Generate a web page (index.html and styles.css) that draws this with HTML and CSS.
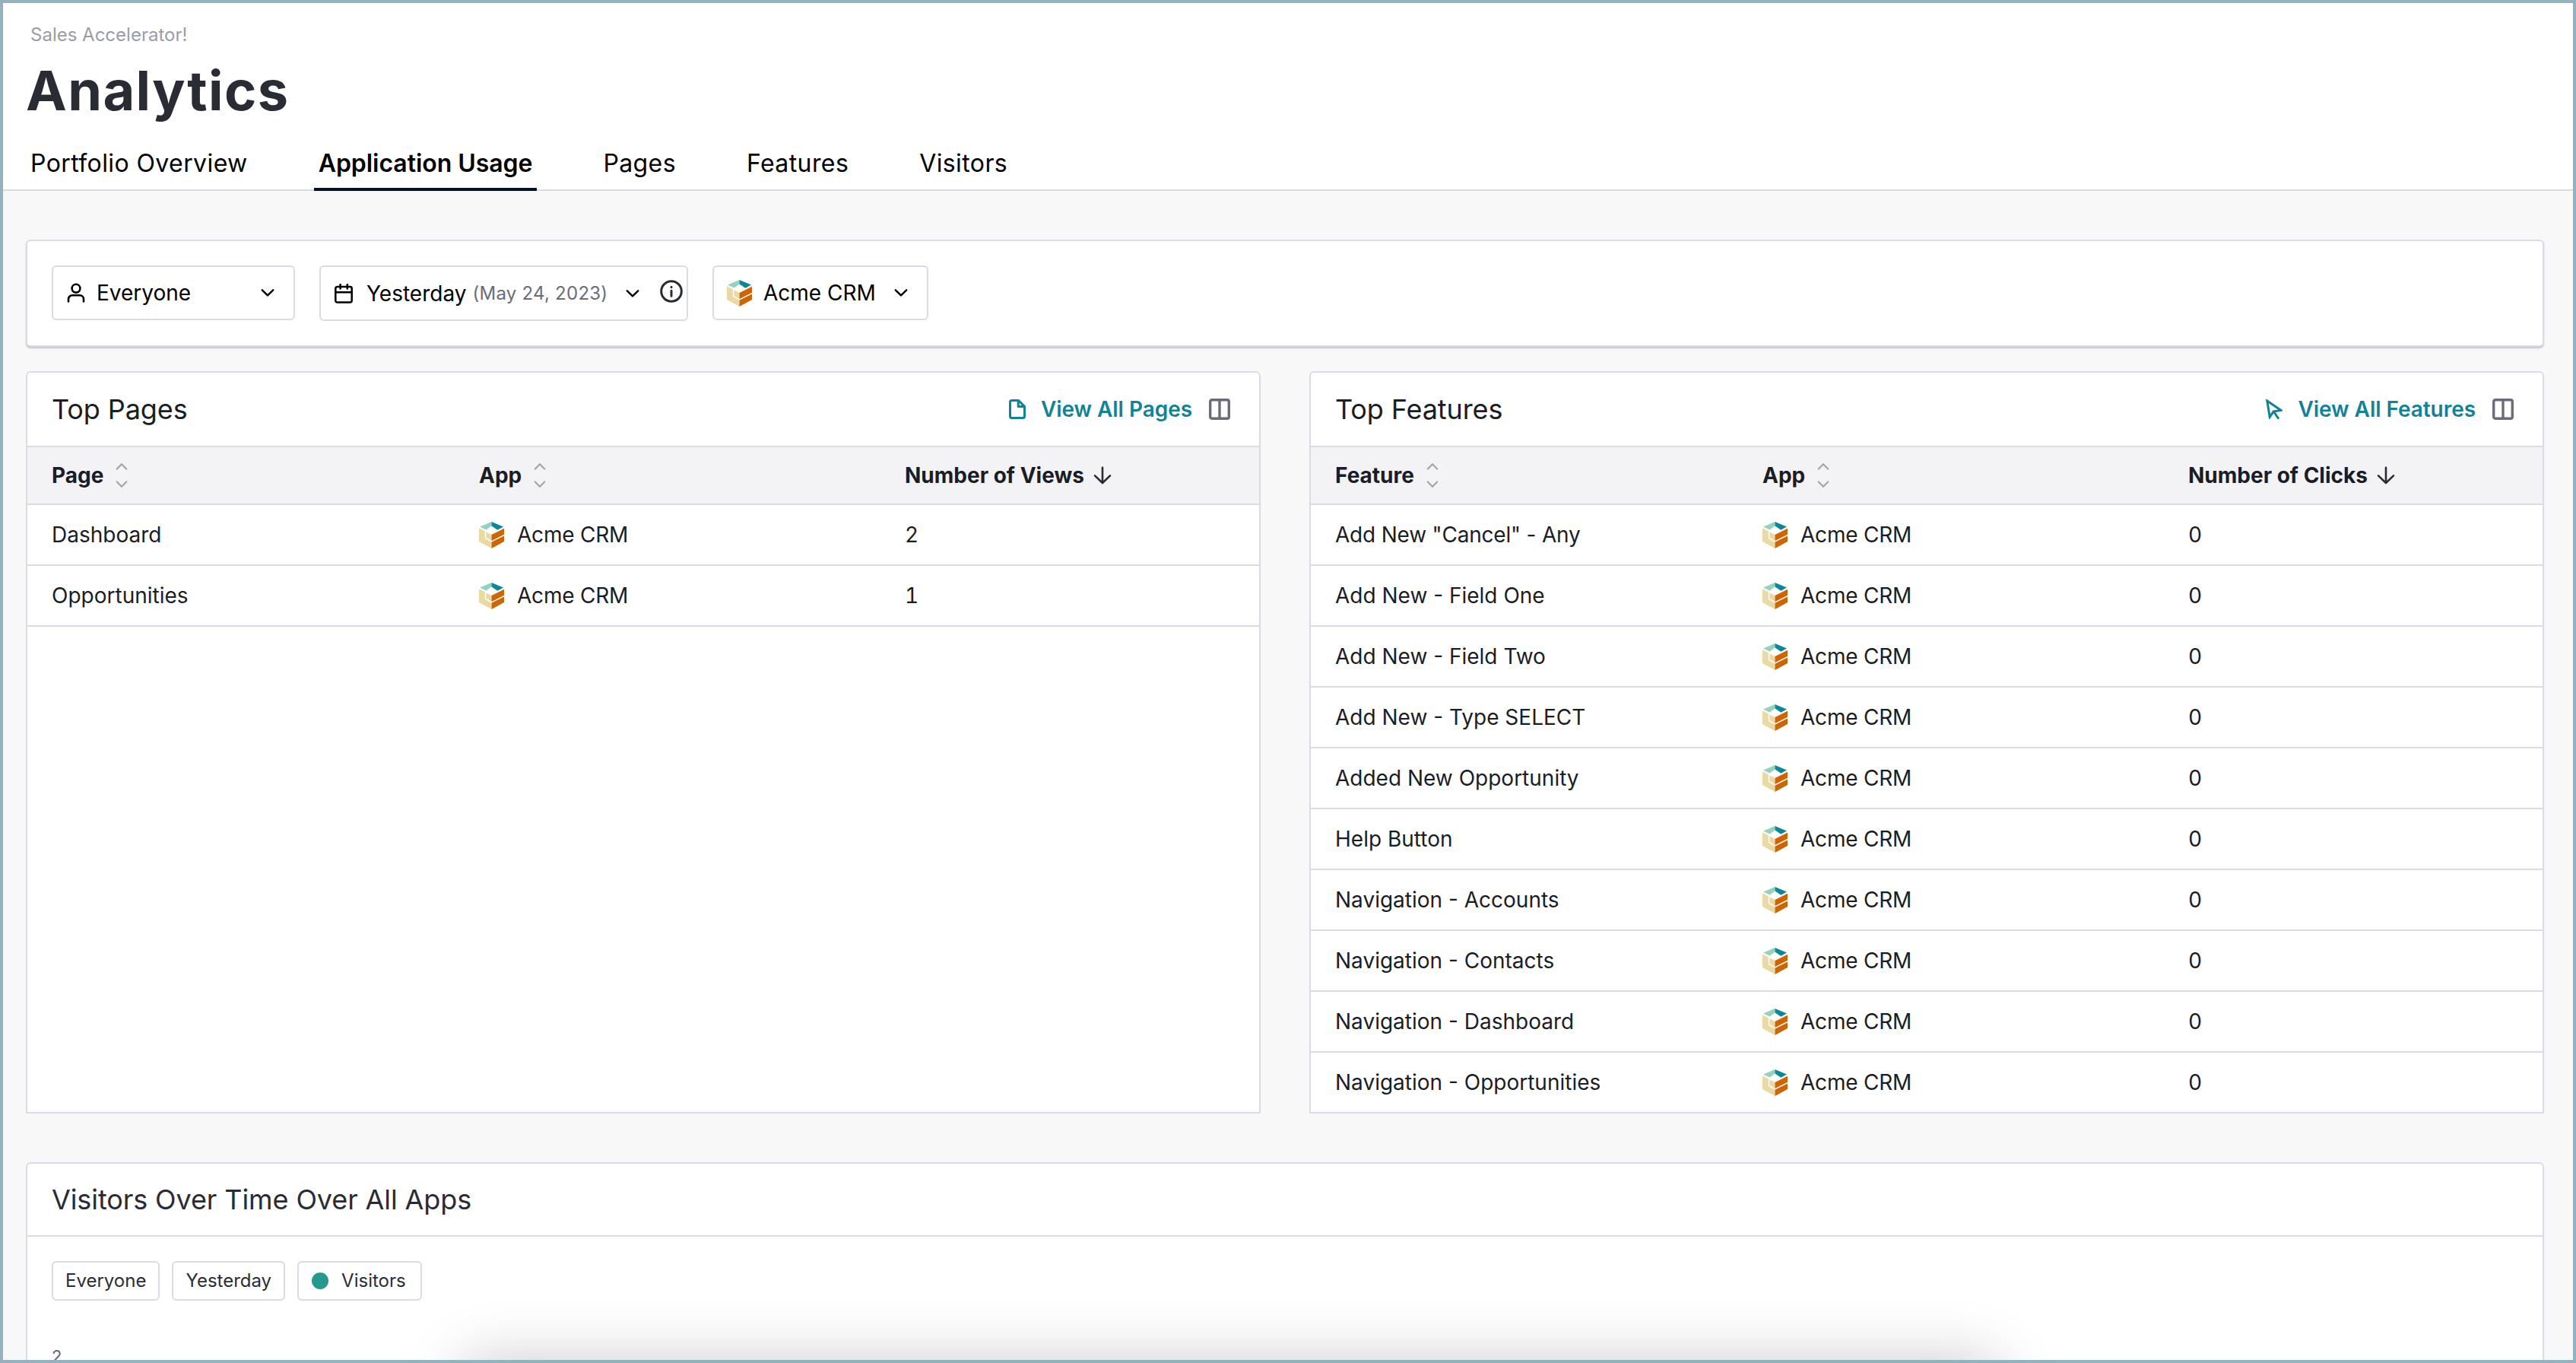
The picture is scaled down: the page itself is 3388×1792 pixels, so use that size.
FILE: index.html
```html
<!DOCTYPE html>
<html lang="en">
<head>
    <meta charset="UTF-8">
    <meta name="viewport" content="width=device-width, initial-scale=1.0">
    <title>Analytics</title>
    <link rel="stylesheet" href="styles.css">
</head>
<body>
    <!-- shared icons -->
    <svg class="sprite" width="0" height="0">
        <symbol id="logo" viewBox="0 0 33 35">
            <path fill="#93d3bd" d="M1 6.6 16.5 0v5.6L9.5 10.6z"/>
            <path fill="#0b879b" d="M16.5 0 32 6.6l-7.6 4.2-7.9-5.2z"/>
            <path fill="#ebd9a3" d="M0 8.2l16.5 8.8v18L0 26z"/>
            <path fill="#cf6500" d="M16.5 17 33 8.8V26l-16.5 9z"/>
            <path fill="none" stroke="#fff" stroke-width="1.5" stroke-linejoin="miter" stroke-linecap="butt" d="M8.6 11.5v9.8l7.9 4.5 17-8.4"/>
        </symbol>
        <symbol id="chevron" viewBox="0 0 18 10">
            <path d="M1.8 1.3 9 8.4l7.2-7.1"/>
        </symbol>
        <symbol id="sort" viewBox="0 0 16 34">
            <path d="M1.8 8.6 8 2.2l6.2 6.4M1.8 25.4 8 31.8l6.2-6.4"/>
        </symbol>
        <symbol id="down" viewBox="0 0 24 24">
            <path d="M12 1.8v20M2 12.4l10 9.6 10-9.6"/>
        </symbol>
        <symbol id="columns" viewBox="0 0 28 28">
            <rect x="1.7" y="1.7" width="24.6" height="24.6" rx="2.2"/>
            <path d="M14 2v24"/>
        </symbol>
    </svg>

    <div class="page">
        <div class="header">
            <div class="subtitle">Sales Accelerator!</div>
            <h1>Analytics</h1>
            <div class="tabs">
                <a class="tab">Portfolio Overview</a>
                <a class="tab active">Application Usage</a>
                <a class="tab">Pages</a>
                <a class="tab">Features</a>
                <a class="tab">Visitors</a>
            </div>
        </div>

        <div class="content">
            <div class="filters">
                <button class="filter filter-segment">
                    <svg class="icon-user" viewBox="0 0 24 26"><circle cx="12" cy="7.2" r="5.4"/><path d="M2 24.5v-3.2a5 5 0 0 1 5-5h10a5 5 0 0 1 5 5v3.2"/></svg>
                    <span>Everyone</span>
                    <svg class="chevron"><use href="#chevron"/></svg>
                </button>
                <button class="filter filter-date">
                    <svg class="icon-calendar" viewBox="0 0 24 26"><rect x="1.3" y="4" width="21.4" height="20.5" rx="2.2"/><path d="M1.3 11.2h21.4M7.6 1v5.6M16.8 1v5.6"/></svg>
                    <span>Yesterday</span>
                    <span class="date">(May 24, 2023)</span>
                    <svg class="chevron"><use href="#chevron"/></svg>
                    <svg class="icon-info" viewBox="0 0 30 30"><circle cx="15" cy="15" r="13.3"/><path d="M15 14.2v7M15 9.2v.6"/></svg>
                </button>
                <button class="filter filter-app">
                    <svg class="logo"><use href="#logo"/></svg>
                    <span>Acme CRM</span>
                    <svg class="chevron"><use href="#chevron"/></svg>
                </button>
            </div>

            <div class="cards">
                <div class="card">
                    <div class="card-header">
                        <h2>Top Pages</h2>
                        <a class="view-all">
                            <svg class="icon-file" viewBox="0 0 22 26"><path d="M12.6 1.6H3.4A1.9 1.9 0 0 0 1.5 3.5v19a1.9 1.9 0 0 0 1.9 1.9h15.2a1.9 1.9 0 0 0 1.9-1.9V9.4z"/><path d="M12.2 1.8v7.8h8"/></svg>
                            View All Pages
                        </a>
                        <svg class="columns"><use href="#columns"/></svg>
                    </div>
                    <table>
                        <thead>
                            <tr>
                                <th>Page<svg class="sort"><use href="#sort"/></svg></th>
                                <th>App<svg class="sort"><use href="#sort"/></svg></th>
                                <th>Number of Views<svg class="down"><use href="#down"/></svg></th>
                            </tr>
                        </thead>
                        <tbody>
                            <tr><td>Dashboard</td><td><svg class="logo"><use href="#logo"/></svg>Acme CRM</td><td>2</td></tr>
                            <tr><td>Opportunities</td><td><svg class="logo"><use href="#logo"/></svg>Acme CRM</td><td>1</td></tr>
                        </tbody>
                    </table>
                </div>

                <div class="card card-full">
                    <div class="card-header">
                        <h2>Top Features</h2>
                        <a class="view-all">
                            <svg class="icon-cursor" viewBox="0 0 22 26"><path d="M1.8 2l3.4 21.4 5-7.4 9.8-1.6zM10.4 16l5.8 8.6"/></svg>
                            View All Features
                        </a>
                        <svg class="columns"><use href="#columns"/></svg>
                    </div>
                    <table>
                        <thead>
                            <tr>
                                <th>Feature<svg class="sort"><use href="#sort"/></svg></th>
                                <th>App<svg class="sort"><use href="#sort"/></svg></th>
                                <th>Number of Clicks<svg class="down"><use href="#down"/></svg></th>
                            </tr>
                        </thead>
                        <tbody>
                            <tr><td class="tight">Add New "Cancel" - Any</td><td><svg class="logo"><use href="#logo"/></svg>Acme CRM</td><td>0</td></tr>
                            <tr><td>Add New - Field One</td><td><svg class="logo"><use href="#logo"/></svg>Acme CRM</td><td>0</td></tr>
                            <tr><td>Add New - Field Two</td><td><svg class="logo"><use href="#logo"/></svg>Acme CRM</td><td>0</td></tr>
                            <tr><td>Add New - Type SELECT</td><td><svg class="logo"><use href="#logo"/></svg>Acme CRM</td><td>0</td></tr>
                            <tr><td>Added New Opportunity</td><td><svg class="logo"><use href="#logo"/></svg>Acme CRM</td><td>0</td></tr>
                            <tr><td>Help Button</td><td><svg class="logo"><use href="#logo"/></svg>Acme CRM</td><td>0</td></tr>
                            <tr><td>Navigation - Accounts</td><td><svg class="logo"><use href="#logo"/></svg>Acme CRM</td><td>0</td></tr>
                            <tr><td>Navigation - Contacts</td><td><svg class="logo"><use href="#logo"/></svg>Acme CRM</td><td>0</td></tr>
                            <tr><td>Navigation - Dashboard</td><td><svg class="logo"><use href="#logo"/></svg>Acme CRM</td><td>0</td></tr>
                            <tr><td>Navigation - Opportunities</td><td><svg class="logo"><use href="#logo"/></svg>Acme CRM</td><td>0</td></tr>
                        </tbody>
                    </table>
                </div>
            </div>

            <div class="chart-card">
                <div class="chart-header">
                    <h2>Visitors Over Time Over All Apps</h2>
                </div>
                <div class="chips">
                    <span class="chip">Everyone</span>
                    <span class="chip">Yesterday</span>
                    <span class="chip chip-visitors"><i class="dot"></i>Visitors</span>
                </div>
                <div class="axis-label">2</div>
            </div>
        </div>

        <!-- top shadow of the panel docked below the page -->
        <div class="panel-shadow"></div>
    </div>
</body>
</html>
```
FILE: styles.css
```css
* {
    box-sizing: border-box;
}

body {
    margin: 0;
    font-family: Inter, sans-serif;
    font-size: 28px;
    color: #1a1d26;
}

svg {
    display: block;
    flex: none;
    fill: none;
    stroke: currentColor;
    stroke-linecap: round;
    stroke-linejoin: round;
}

.sprite {
    position: absolute;
}

.page {
    position: relative;
    width: 3388px;
    height: 1792px;
    border: 4px solid #94b1c0;
    background-color: #f8f8f8;
    overflow: hidden;
}

/* header */
.header {
    height: 247px;
    padding: 27px 30px 0;
    background-color: white;
    border-bottom: 2px solid #d9dce5;
}

.subtitle {
    padding-left: 6px;
    font-size: 24px;
    line-height: 30px;
    color: #9b9ca5;
}

h1 {
    margin: 12px 0 0;
    font-size: 72px;
    font-weight: 700;
    line-height: 92px;
    letter-spacing: 1.4px;
    color: #2a2c35;
}

.tabs {
    display: flex;
    gap: 81px;
    margin-top: 16px;
}

.tab {
    height: 70px;
    padding: 0 6px;
    font-size: 32px;
    line-height: 67px;
    letter-spacing: 0.4px;
    color: black;
}

.tab.active {
    font-weight: 600;
    letter-spacing: -0.05px;
    border-bottom: 4px solid #00122b;
}

/* filters */
.content {
    padding: 64px 38px 0 30px;
}

.filters {
    display: flex;
    align-items: flex-start;
    gap: 32px;
    height: 141px;
    padding: 32px;
    background-color: white;
    border: 2px solid #d9dce5;
    border-radius: 6px;
    box-shadow: 0 2px 2px rgba(0, 0, 0, 0.2);
}

.filter {
    display: flex;
    align-items: center;
    height: 72px;
    padding: 0 20px;
    background-color: white;
    border: 2px solid #d9dce5;
    border-radius: 6px;
    font-family: inherit;
    font-size: 28px;
    color: black;
}

.chevron {
    width: 18px;
    height: 10px;
    stroke-width: 2.4;
}

.filter-segment {
    width: 320px;
    padding-left: 18px;
    padding-right: 25px;
}

.icon-user {
    width: 24px;
    height: 26px;
    margin-right: 15px;
    stroke-width: 2.6;
}

.filter-segment .chevron {
    margin-left: auto;
}

.filter-date {
    width: 485px;
    height: 73px;
    padding-left: 18px;
    padding-right: 5px;
}

.icon-calendar {
    width: 24px;
    height: 26px;
    margin-right: 18px;
    stroke-width: 2.5;
}

.date {
    margin-left: 8px;
    font-size: 24px;
    letter-spacing: 0.25px;
    color: #6b6c77;
}

.filter-date .chevron {
    margin-left: 24px;
}

.icon-info {
    width: 30px;
    height: 30px;
    margin: 0 0 6px auto;
    stroke-width: 3;
    color: #2a2c35;
}

.filter-app {
    width: 284px;
    padding: 0 25px 0 17px;
}

.filter-app .chevron {
    margin-left: auto;
}

.logo {
    width: 33px;
    height: 35px;
    stroke: none;
}

.filter-app .logo {
    margin-right: 15px;
}

/* tables */
.cards {
    display: grid;
    grid-template-columns: 1624px 1624px;
    gap: 64px;
    margin-top: 32px;
}

.card {
    height: 976px;
    background-color: white;
    border: 2px solid #d9dce5;
    border-radius: 6px 6px 0 0;
    overflow: hidden;
}

.card-header {
    display: flex;
    align-items: center;
    height: 98px;
    padding: 0 38px 0 32px;
    border-bottom: 2px solid #d9dce5;
}

h2 {
    margin: 0;
    font-size: 36px;
    font-weight: 400;
    letter-spacing: -0.1px;
}

.view-all {
    display: flex;
    align-items: center;
    gap: 20px;
    margin-left: auto;
    font-weight: 600;
    letter-spacing: -0.05px;
    color: #128297;
}

.icon-file,
.icon-cursor {
    width: 22px;
    height: 26px;
    stroke-width: 3;
}

.icon-cursor {
    stroke-linejoin: miter;
}

.columns {
    width: 28px;
    height: 28px;
    margin-left: 22px;
    stroke-width: 3.4;
    color: #6b6c77;
}

table {
    width: 1620px;
    border-collapse: separate;
    border-spacing: 0;
}

tr {
    display: grid;
    grid-template-columns: 562px 560px 1fr;
    height: 80px;
    padding-left: 32px;
    border-bottom: 2px solid #d9dce5;
}

thead tr {
    height: 76px;
    background-color: #f3f3f6;
}

.card-full tbody tr:last-child {
    height: 78px;
    border-bottom: none;
}

th,
td {
    display: flex;
    align-items: center;
    padding: 0;
    text-align: left;
}

th {
    font-weight: 700;
}

td:nth-child(2),
.tight {
    letter-spacing: -0.2px;
}

td:last-child {
    font-variant-numeric: tabular-nums;
}

td .logo {
    margin-right: 17px;
}

.sort {
    width: 16px;
    height: 34px;
    margin-left: 16px;
    stroke-width: 2.2;
    color: #a3a4ac;
}

.down {
    width: 24px;
    height: 24px;
    margin-left: 12px;
    stroke-width: 2.6;
    color: #2a2c35;
}

/* chart */
.chart-card {
    height: 400px;
    margin-top: 64px;
    background-color: white;
    border: 2px solid #d9dce5;
    border-radius: 6px;
    color: #2a2c35;
}

.chart-header {
    display: flex;
    align-items: center;
    height: 96px;
    padding-left: 32px;
    border-bottom: 2px solid #d9dce5;
}

.chips {
    display: flex;
    gap: 16px;
    padding: 32px 32px 0;
}

.chip {
    display: flex;
    align-items: center;
    height: 52px;
    padding: 0 16px;
    border: 2px solid #d9dce5;
    border-radius: 6px;
    font-size: 24px;
    line-height: 28px;
    padding-bottom: 1px;
}

.chip-visitors {
    padding-right: 19px;
    padding-left: 17px;
}

.dot {
    width: 22px;
    height: 22px;
    margin-right: 17px;
    border-radius: 50%;
    background-color: #25998e;
}

.axis-label {
    margin: 60px 0 0 32px;
    font-size: 22px;
    line-height: 26px;
    color: #666;
}

.panel-shadow {
    position: absolute;
    top: 1786px;
    left: 604px;
    width: 2020px;
    height: 200px;
    border-radius: 16px;
    box-shadow: 0 0 80px rgba(0, 0, 0, 0.22);
}
```
